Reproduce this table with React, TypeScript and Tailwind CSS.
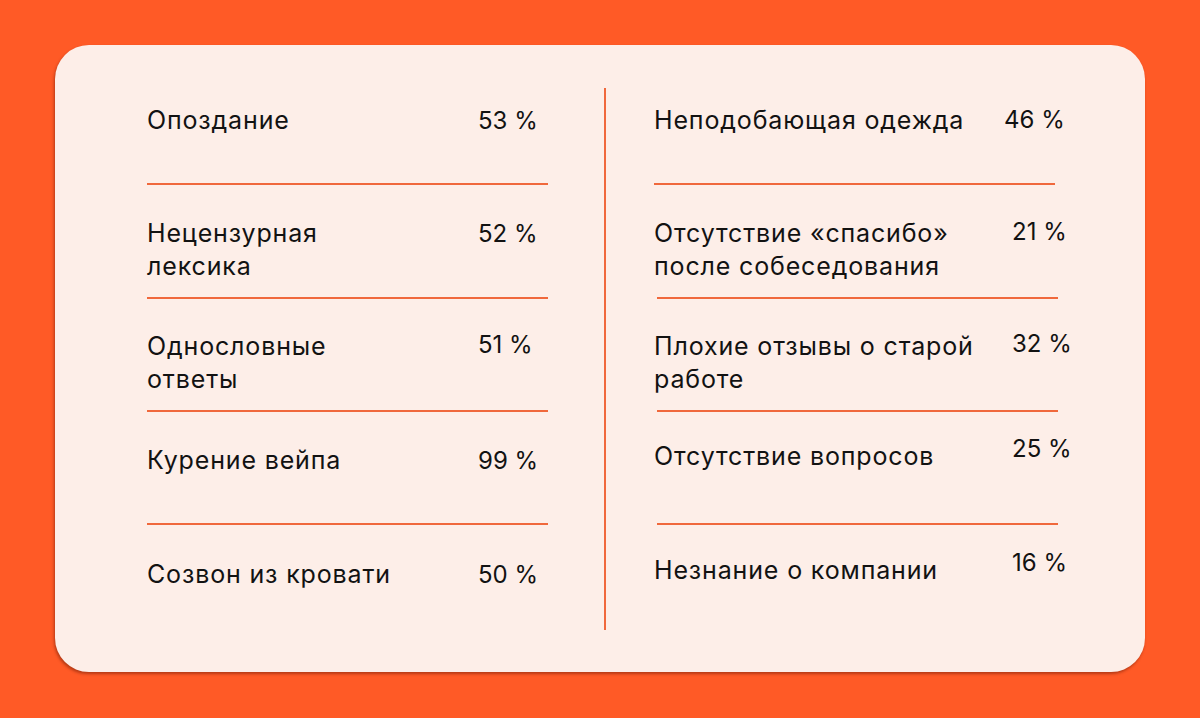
import React from "react";

type Row = { label: string[]; pct: string };

const left: Row[] = [
  { label: ["Опоздание"], pct: "53 %" },
  { label: ["Нецензурная", "лексика"], pct: "52 %" },
  { label: ["Однословные", "ответы"], pct: "51 %" },
  { label: ["Курение вейпа"], pct: "99 %" },
  { label: ["Созвон из кровати"], pct: "50 %" },
];

const right: Row[] = [
  { label: ["Неподобающая одежда"], pct: "46 %" },
  { label: ["Отсутствие «спасибо»", "после собеседования"], pct: "21 %" },
  { label: ["Плохие отзывы о старой", "работе"], pct: "32 %" },
  { label: ["Отсутствие вопросов"], pct: "25 %" },
  { label: ["Незнание о компании"], pct: "16 %" },
];

function Column({ rows, side }: { rows: Row[]; side: "l" | "r" }) {
  // text tops relative to column top (y=88)
  const textTops = side === "l" ? [16, 129, 242, 356, 470] : [16, 129, 242, 352, 466];
  const pctShifts = side === "l" ? [0, 0, -2, 0, 0] : [-1, -2, -3, -8, -8];
  const pctLefts = side === "l" ? [331, 331, 331, 331, 331] : [350, 358, 358, 358, 358];
  const lineTops = [95, 209, 322, 435];
  return (
    <div className="relative h-[542px] w-[412px]">
      {rows.map((r, i) => (
        <div
          key={i}
          className="absolute left-0 right-0 flex"
          style={{ top: textTops[i] }}
        >
          <div className="text-[25px] leading-[33px] tracking-[0.85px]">
            {r.label.map((l, j) => (
              <div key={j} className="whitespace-nowrap">{l}</div>
            ))}
          </div>
          <div
            className="absolute whitespace-nowrap text-[24px] leading-[33px]"
            style={{ left: pctLefts[i], top: pctShifts[i] }}
          >
            {r.pct}
          </div>
        </div>
      ))}
      {lineTops.map((t, i) => (
        <div
          key={i}
          className="absolute h-[2px] bg-[#F0683C]"
          style={{
            top: t,
            left: side === "r" && i > 0 ? 3 : 0,
            width: 401,
          }}
        />
      ))}
    </div>
  );
}

export default function App() {
  return (
    <div className="flex h-[718px] w-[1200px] items-start bg-[#FF5A26] pl-[55px] pt-[45px]">
      <div
        className="flex h-[627px] w-[1090px] items-start rounded-[34px] bg-[#FDEEE8] pt-[43px] text-[#121212] shadow-[-1px_2px_3px_rgba(90,20,0,0.45)]"
        style={{ fontFamily: "Inter, 'Noto Sans', sans-serif" }}
      >
        <div className="ml-[92px]">
          <Column rows={left} side="l" />
        </div>
        <div className="ml-[45px] h-[542px] w-[2px] bg-[#F0683C]" />
        <div className="ml-[48px]">
          <Column rows={right} side="r" />
        </div>
      </div>
    </div>
  );
}
